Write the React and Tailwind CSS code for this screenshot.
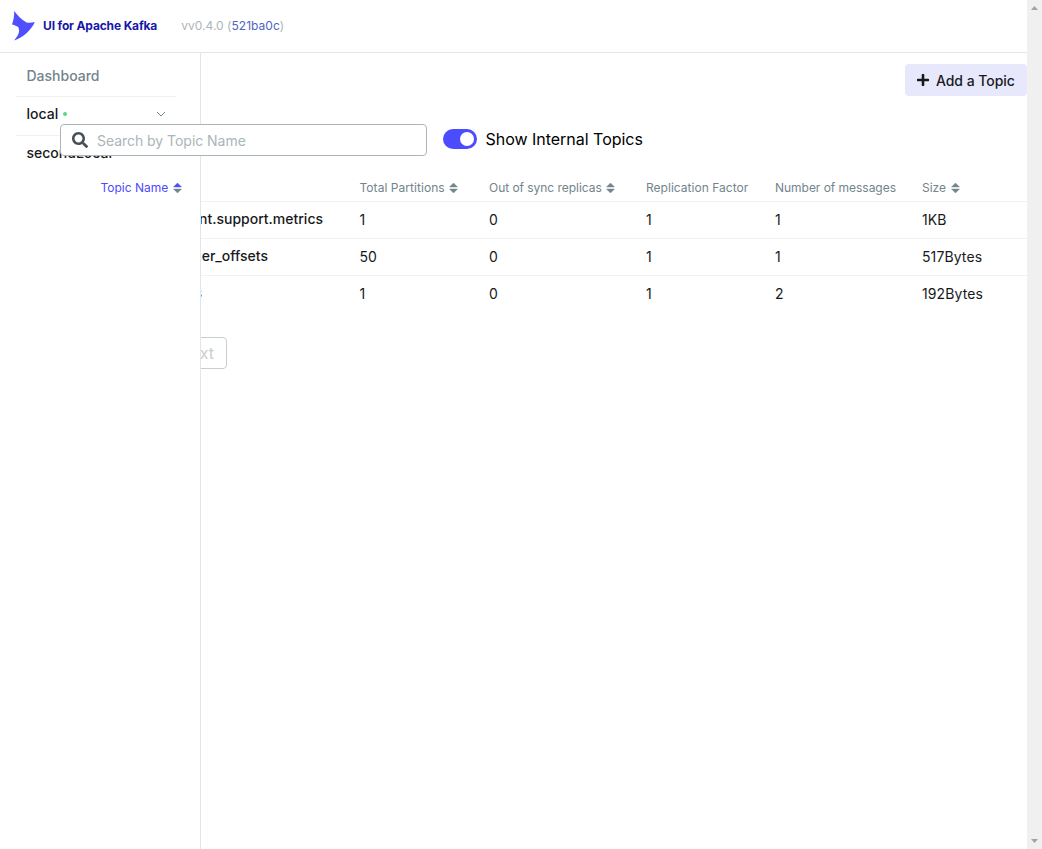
import React from 'react';
import { FaSearch } from 'react-icons/fa';

function SortIcon({ active }) {
  return (
    <svg width="9" height="10" viewBox="0 0 9 10" className="shrink-0">
      <path d="M4.500 0L8.500 4H0.500Z" fill={active ? '#4C4CFF' : '#73848C'} stroke={active ? '#4C4CFF' : '#73848C'} strokeWidth="0.400" strokeLinejoin="round" />
      <path d="M4.500 10L0.500 6H8.500Z" fill="#73848C" stroke="#73848C" strokeWidth="0.400" strokeLinejoin="round" />
    </svg>
  );
}

const rows = [
  { name: '__confluent.support.metrics', pad: 'w-[122px]', cells: ['1', '0', '1', '1', '1KB'] },
  { name: '__consumer_offsets', pad: 'w-[67px]', cells: ['50', '0', '1', '1', '517Bytes'] },
  { name: 'users', pad: 'w-[1px]', cells: ['1', '0', '1', '2', '192Bytes'] },
];

const heads = [
  ['Total Partitions', true, 'tracking-[0.05px]'],
  ['Out of sync replicas', true, 'tracking-[-0.04px]'],
  ['Replication Factor', false, 'tracking-[0.03px]'],
  ['Number of messages', false, 'tracking-[-0.03px]'],
  ['Size', true, ''],
];

const cols = 'grid grid-cols-[158.5px_129.5px_157px_129px_147px_1fr]';

function Header() {
  return (
    <header className="flex h-[53px] shrink-0 items-center border-b border-[#E3E6E8] pl-3">
      <svg width="23" height="30" viewBox="0 0 23 30" className="shrink-0">
        <path d="M2.300 0C5 4 9.500 8.500 14.500 11.500C17.500 12.200 20 11.600 22.800 11C19.500 19 11 26.500 2 29.500C5.500 25.500 8 21.500 6.800 18C7 16.500 6 15 0 13.500C1.500 9.500 2.200 5 2.300 0Z" fill="#4F4FFF" />
      </svg>
      <span className="ml-2 text-[12px] leading-5 font-bold tracking-[-0.15px] text-[#1717A8]">UI for Apache Kafka</span>
      <span className="ml-6 text-[12px] leading-5 tracking-[0.03px] text-[#ABB5BA]">
        vv0.4.0 (<span className="text-[#4F63C6]">521ba0c</span>)
      </span>
    </header>
  );
}

function Sidebar() {
  return (
    <aside className="w-[201px] shrink-0 border-r border-[#E3E6E8] pt-1 pl-4 text-[14px] font-medium">
      <nav className="w-40 text-[#171A1C]">
        <div className="flex h-10 items-center border-b border-[#F1F2F3] pb-0.5 pl-[10.500px] text-[#73848C]">Dashboard</div>
        <div className="flex h-[39px] items-center border-b border-[#F1F2F3] pr-[10px] pb-1 pl-[10.500px]">
          <span className="-mt-0.5">local</span>
          <span className="ml-[5px] h-1 w-1 rounded-full bg-[#5CD685]" />
          <svg width="10" height="6" viewBox="0 0 10 6" fill="none" className="ml-auto">
            <path d="M1 1L5 5L9 1" stroke="#73848C" />
          </svg>
        </div>
        <div className="flex h-[39px] items-center pb-1.5 pl-[10.500px]">secondLocal</div>
      </nav>
    </aside>
  );
}

export default function App() {
  return (
    <div className="flex h-[849px] w-[1042px] overflow-hidden bg-white font-['Inter',sans-serif] text-[#171A1C]">
      <div className="relative flex w-[1027px] shrink-0 flex-col">
        <Header />
        <div className="flex min-h-0 flex-1">
          <Sidebar />
          <main className="min-w-0 flex-1 overflow-hidden">
            <div className="flex h-[59px] justify-end pt-[11px]">
              <button className="flex h-8 w-[122px] items-center rounded bg-[#E8E8FC] pl-3 text-[14px] font-medium">
                <svg width="12" height="12" viewBox="0 0 12 12" className="shrink-0">
                  <path d="M6 1V11M1 6H11" stroke="#171A1C" strokeWidth="2.600" strokeLinecap="round" />
                </svg>
                <span className="ml-[7px] tracking-[-0.05px]">Add a Topic</span>
              </button>
            </div>
            <div className="flex h-[62px] items-start pt-[17px] pl-[242px]">
              <span className="flex h-5 w-[34px] items-center justify-end rounded-full bg-[#4C4CFF] pr-[3px]">
                <span className="h-3.5 w-3.5 rounded-full bg-white" />
              </span>
              <span className="ml-[8.500px] text-[16px] leading-5 tracking-[-0.02px] text-black">Show Internal Topics</span>
            </div>
            <div className={`${cols} h-7 border-b border-[#F1F2F3] text-[12px] leading-7 text-[#73848C]`}>
              <span />
              {heads.map(([label, sortable, tracking]) => (
                <div key={label} className={`flex items-center gap-[4.500px] whitespace-nowrap ${tracking}`}>
                  {label}
                  {sortable && <SortIcon />}
                </div>
              ))}
            </div>
            {rows.map((row, i) => (
              <div key={row.name} className={`${cols} h-[37px] text-[14px] leading-9 ${i < 2 ? 'border-b border-[#F1F2F3]' : ''}`}>
                <div>
                  <div className={`${row.pad} flex justify-end overflow-hidden leading-[34px] font-medium whitespace-nowrap`}>{row.name}</div>
                </div>
                {row.cells.map((v, j) => (
                  <div key={j} className="tracking-[0.1px]">{v}</div>
                ))}
              </div>
            ))}
            <div className="mt-6 flex w-[26px] justify-end overflow-hidden">
              <button className="h-8 shrink-0 rounded border border-[#C7CED1] px-3 text-[16px] leading-[30px] text-[#C7CED1]">Next</button>
            </div>
          </main>
        </div>
        <div className="absolute top-[124px] left-[60px] flex h-8 w-[367px] items-center rounded border border-[#ABB5BA] bg-white pl-[11px]">
          <FaSearch size={16} color="#454F54" />
          <span className="ml-[9px] text-[14px] tracking-[-0.04px] text-[#ABB5BA]">Search by Topic Name</span>
        </div>
        <div className="absolute top-[178px] left-[100.500px] flex h-5 items-center gap-[4.500px] text-[12px] text-[#4C4CFF]">
          Topic Name
          <SortIcon active />
        </div>
      </div>
      <div className="flex w-[15px] shrink-0 flex-col items-center justify-between bg-[#F0F0F0] py-[6px]">
        <svg width="7" height="4" viewBox="0 0 7 4"><path d="M3.500 0L7 4H0Z" fill="#A3A3A3" /></svg>
        <svg width="7" height="4" viewBox="0 0 7 4"><path d="M3.500 4L0 0H7Z" fill="#A3A3A3" /></svg>
      </div>
    </div>
  );
}
